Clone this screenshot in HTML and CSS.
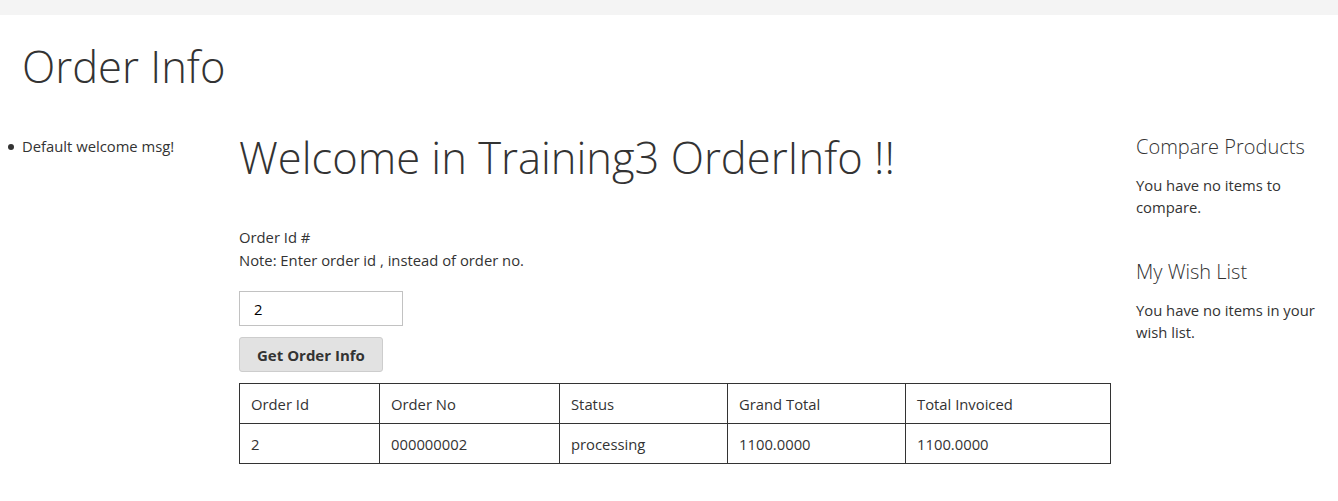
FILE: index.html
```html
<!DOCTYPE html>
<html>
<head>
<meta charset="utf-8">
<link rel="stylesheet" href="styles.css">
</head>
<body>
<div class="topbar"></div>
<div class="title-wrap"><h1 class="page-title">Order Info</h1></div>
<div class="columns">
  <div class="sidebar-main">
    <ul class="welcome-list"><li>Default welcome msg!</li></ul>
  </div>
  <div class="main">
    <h1 class="welcome">Welcome in Training3 OrderInfo !!</h1>
    <div class="label">Order Id #</div>
    <div class="note">Note: Enter order id , instead of order no.</div>
    <input class="order-input" type="text" value="2">
    <button class="btn">Get Order Info</button>
    <table class="orders">
      <colgroup><col class="c1"><col class="c2"><col class="c3"><col class="c4"><col class="c5"></colgroup>
      <tr><td>Order Id</td><td>Order No</td><td>Status</td><td>Grand Total</td><td>Total Invoiced</td></tr>
      <tr><td>2</td><td>000000002</td><td>processing</td><td>1100.0000</td><td>1100.0000</td></tr>
    </table>
  </div>
  <div class="sidebar-add">
    <div class="block">
      <div class="block-title">Compare Products</div>
      <p class="block-text">You have no items to compare.</p>
    </div>
    <div class="block">
      <div class="block-title">My Wish List</div>
      <p class="block-text">You have no items in your wish list.</p>
    </div>
  </div>
</div>
</body>
</html>
```
FILE: styles.css
```css
html, body {
  margin: 0;
  padding: 0;
}
body {
  font-family: "Open Sans", "Liberation Sans", sans-serif;
  font-size: 14.8px;
  color: #333;
  background: #fff;
}
.topbar {
  height: 15px;
  background: #f4f4f4;
}
.title-wrap {
  padding: 0 22px;
}
.page-title {
  margin: 0;
  padding-top: 24px;
  font-size: 43.5px;
  font-weight: 300;
  line-height: 56px;
}
.columns {
  display: grid;
  grid-template-columns: 213px 871px 1fr;
  column-gap: 26px;
  padding-top: 23px;
  padding-right: 14px;
}
.welcome-list {
  margin: 0;
  padding-left: 22px;
  list-style: none;
  line-height: 20px;
}
.welcome-list li {
  margin-top: 18px;
}
.welcome-list li::before {
  content: "";
  display: inline-block;
  width: 6px;
  height: 6px;
  border-radius: 50%;
  background: #333;
  margin-left: -14px;
  margin-right: 8px;
  vertical-align: 2px;
}
.welcome {
  margin: 0;
  font-size: 43.5px;
  font-weight: 300;
  line-height: 60px;
  padding-top: 10px;
}
.label {
  margin-top: 38px;
  line-height: 23px;
}
.note {
  line-height: 23px;
}
.order-input {
  display: block;
  box-sizing: border-box;
  margin-top: 19px;
  width: 164px;
  height: 35px;
  border: 1px solid #c2c2c2;
  padding: 0 14px;
  font-family: inherit;
  font-size: 14.8px;
  color: #000;
  outline: none;
}
.btn {
  display: block;
  box-sizing: border-box;
  margin-top: 11px;
  height: 35px;
  padding: 0 17px;
  background: #e2e2e2;
  border: 1px solid #cdcdcd;
  border-radius: 3px;
  font-family: inherit;
  font-size: 15px;
  font-weight: 700;
  color: #333;
}
.orders {
  margin-top: 11px;
  width: 871px;
  border-collapse: collapse;
  table-layout: fixed;
}
.orders td {
  border: 1px solid #333;
  height: 40px;
  padding: 0 11px;
  line-height: 20px;
  box-sizing: border-box;
}
.c1 { width: 140px; }
.c2 { width: 180px; }
.c3 { width: 168px; }
.c4 { width: 178px; }
.c5 { width: 205px; }
.block-title {
  font-size: 20px;
  font-weight: 300;
  line-height: 26px;
  margin-top: 16px;
}
.block-text {
  margin: 14px 0 0 0;
  line-height: 22px;
}
.block + .block {
  margin-top: 41px;
}
```
